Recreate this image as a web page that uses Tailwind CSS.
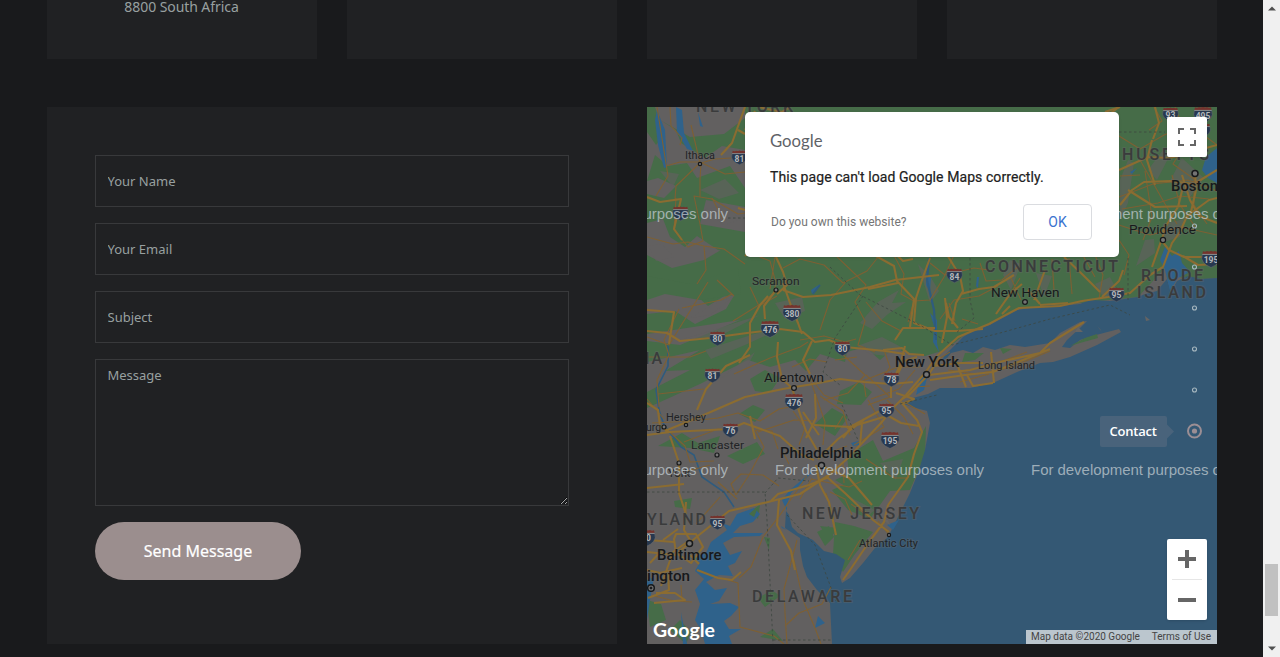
<!DOCTYPE html>
<html lang="en">
<head>
<meta charset="utf-8">
<title>Contact</title>
<script src="https://cdn.jsdelivr.net/npm/@tailwindcss/browser@4"></script>
</head>
<body class="flex h-[657px] w-[1280px] overflow-hidden bg-[#191a1c] font-['Noto_Sans',sans-serif] text-[#98a0a0]">
<main class="w-[1263px] shrink-0 pl-[47px]">
  <section class="flex h-[59px] gap-[30px] overflow-hidden">
    <div class="w-[270px] bg-[#202123] pr-px text-center text-[14px] leading-[14px] tracking-[-0.07px]"><p>8800 South Africa</p></div>
    <div class="w-[270px] bg-[#202123]"></div>
    <div class="w-[270px] bg-[#202123]"></div>
    <div class="w-[270px] bg-[#202123]"></div>
  </section>
  <section class="mt-12 flex gap-[30px]">
    <form class="flex h-[537px] w-[570px] flex-col gap-4 bg-[#202123] p-12 text-[13px]">
      <input class="block h-[52px] w-[474px] shrink-0 border border-[#38393b] bg-transparent px-[11.5px] placeholder:text-[#98a0a0]" placeholder="Your Name">
      <input class="block h-[52px] w-[474px] shrink-0 border border-[#38393b] bg-transparent px-[11.5px] placeholder:text-[#98a0a0]" placeholder="Your Email">
      <input class="block h-[52px] w-[474px] shrink-0 border border-[#38393b] bg-transparent px-[11.5px] placeholder:text-[#98a0a0]" placeholder="Subject">
      <textarea class="block h-[147px] w-[474px] shrink-0 resize border border-[#38393b] bg-transparent px-[11.5px] py-[5px] leading-5 placeholder:text-[#98a0a0]" placeholder="Message"></textarea>
      <button type="button" class="h-[58px] w-[206px] shrink-0 rounded-full bg-[#9b8e8e] text-[16px] text-white [-webkit-text-stroke:0.2px_white]">Send Message</button>
    </form>
    <div class="relative h-[537px] w-[570px] overflow-hidden bg-[#626060]">
      <svg class="block" width="570" height="537" viewBox="647 107 570 537" font-family="Roboto, sans-serif">
        <defs>
          <symbol id="sh" viewBox="0 0 20 18" overflow="visible">
            <path d="M1.5 4 Q-.5 9 2.5 12.500 Q5 15.500 10 17.500 Q15 15.500 17.500 12.500 Q20.500 9 18.500 4Z" fill="#27384f" stroke="#6d7175" stroke-width=".5"/>
            <path d="M2 1.200 Q4 2.200 6 1 Q8 2 10 .8 Q12 2 14 1 Q16 2.200 18 1.200 L18.600 4H1.400Z" fill="#74332d"/>
            <path d="M1.400 4.400H18.600" stroke="#969696" stroke-width=".9"/>
          </symbol>
        </defs>
        <!-- Woodland -->
        <g fill="#466c48">
          <path d="M745 107H1217V278L1185 280 1165 268 1138 297 1060 305 1017 309 990 324 963 336 945 350 925 356 893 349 880 360 865 347 847 352 845 362 820 354 806 371 795 360 770 367 748 360 700 384 647 408V392L690 370 665 371 700 350 647 362V341L680 345 740 320 700 326 647 334V314L675 311 695 324 726 309 739 287 708 306 690 290 647 288V255L672 268 704 260 726 247 745 255Z"/>
          <path d="M660 120L690 137 724 134 745 118V150L722 146 705 158 681 143 676 130ZM647 107H655L664 135 656 145 647 132ZM655 155L668 166 687 163 697 178 730 166 745 188V207L706 200 700 224 745 232V256L718 250 697 236 685 247 670 237 663 219 647 223V194L664 198 676 186 658 178 647 181Z"/>
          <path d="M847 456L873 440 883 461 914 448 926 426 925 455 910 490 890 491 870 519 848 510 832 490 850 482ZM835 522L854 526 873 532 855 554 843 572 833 554ZM820 526L838 528 829 540ZM750 379L765 370 780 378 770 393 755 391ZM739 414L753 405 765 410 755 422ZM727 456L757 442 765 454 743 464ZM658 446L682 433 698 443 720 436 714 453 690 448ZM674 501L692 498 690 509 675 507ZM750 511L760 505 758 519ZM764 537L770 538 769 550ZM817 532L829 526 834 537 825 546ZM647 600L661 604 666 620 650 627ZM758 598L772 590 780 596 765 607ZM840 391L859 382 872 392 861 405 837 404ZM815 424L832 408 848 417 835 436ZM760 637L773 629 783 641ZM670 630L680 620 691 632 686 644ZM835 480L848 474 865 477 850 489Z"/>
          <path d="M647 276L690 284 738 268 741 294 700 300 665 294 647 300Z"/>
        </g>
        <!-- Clearings -->
        <g fill="#626060" opacity=".65">
          <path d="M860 323L878 302 899 290 892 303 906 302 888 314 872 329ZM857 346L882 337 903 348 895 357 870 354ZM690 318L718 302 735 296 710 315ZM680 340L710 331 760 315 720 336ZM705 350L754 334 780 329 745 345 711 359ZM775 303L802 297 805 311 785 319ZM721 378L755 352 745 370ZM1136 266L1145 240 1154 239 1155 253ZM1148 170L1163 150 1170 155 1157 180ZM1170 181L1182 158 1204 178 1190 197ZM1120 180L1128 160 1134 163 1128 203 1120 220ZM1163 224L1184 219 1180 237 1164 242ZM1036 273L1052 276 1044 297ZM1095 284L1110 277 1118 292 1104 298ZM880 463L903 459 896 480ZM850 497L875 510 866 517ZM918 264L930 276 939 291 930 303Z"/>
          <path d="M660 171L679 174 673 187ZM700 190L725 179 739 193 719 199ZM704 209L728 206 740 220 724 225ZM1003 275L1010 260 1021 264 1011 290ZM648 246L662 244 674 257 656 261Z"/>
        </g>
        <!-- Ocean and bays -->
        <path fill="#345874" d="M1217 278L1201 279 1188 276 1177 281 1171 292 1167 279 1157 291 1145 294 1138 297 1110 301 1090 300 1080 304 1060 306 1050 305 1017 310 1000 318 990 325 976 329 963 337 953 347 946 354 941 361 947 358 951 353 963 350 973 353 983 347 995 350 1010 345 1025 347 1050 343 1060 333 1080 322 1087 321 1080 328 1067 340 1062 347 1070 348 1080 340 1096 335 1119 329 1121 332 1097 345 1070 357 1053 362 1040 363 1017 372 993 383 970 388 940 388 928 394 913 398 902 403 912 407 927 411 930 423 925 450 918 473 910 493 900 513 888 537 875 548 863 563 850 578 842 583 840 577 845 560 836 554 824 551 813 540 798 533 792 527 789 515 786 511 785 528 800 538 800 550 803 566 807 577 817 590 830 603 832 644H1217Z"/>
        <g fill="#2f628b">
          <path d="M1217 148L1206 157 1202 170 1208 178 1217 183ZM1165 270L1160 260 1165 247 1172 256 1179 251 1182 263 1190 272 1178 278 1170 291Z"/>
          <path d="M737 514L754 508 760 514 753 522 740 526 733 533 763 533 760 536 734 537 723 543 730 555 742 551 735 563 728 566 733 576 719 575 706 582 715 590 727 588 719 601 710 604 730 603 739 607 731 616 724 621 729 629 741 629 729 636 732 644H705L701 630 695 620 700 604 695 590 704 579 695 571 700 562 690 558 706 553 711 542 727 530 722 523 730 526Z"/>
          <path d="M657 110L665 130 667 167 664 168 658 145 655 120ZM676 107L682 110 684 133 693 151 687 149 677 132ZM698 112L703 127 700 126ZM781 526L787 530 782 528ZM927 276L931 276 930 292 926 285ZM930 313L937 320 937 343 939 352 933 342 934 326ZM977 277L979 277 978 288 976 286ZM1130 172L1137 168 1132 174ZM920 379L928 374 924 390 916 395ZM851 443L862 440 860 445 853 446ZM811 290L820 284 812 294Z"/>
          <path d="M787 511L782 500 790 490 804 478 816 468 803 482 791 493 787 504ZM654 577L650 600 647 620V580ZM681 612L687 644H683ZM825 623L815 628 818 616ZM887 525L899 520 893 530Z"/>
        </g>
        <g fill="none" stroke="#2f5b7e" stroke-width="1.600"><path d="M668 345V366L656 390L659 410 664 425 681 447 694 455 702 477 724 492 734 507"/><path d="M929 258L927 280 934 310 936 340" stroke-width="2.200"/><path d="M813 294L820 285"/></g>
        <g fill="#656464"><path d="M1075 332L1078 327 1083 332ZM1097 326L1100 329 1102 332ZM1145 316L1150 320 1146 321ZM883 520L890 525 888 520Z"/></g>
        <path fill="#466c48" d="M1070 346L1085 338 1097 334 1098 338 1080 343ZM965 353L984 353 975 360 962 362ZM1000 348L1012 349 1003 354ZM749 514L759 505 754 517Z"/>
        <!-- Minor roads -->
        <g fill="none" stroke="#7e6033" stroke-width="1.100" stroke-linejoin="round">
          <path d="M657 107L668 176 656 196M670 107L671 126 682 138 680 145M691 125L700 163 676 186 675 199M731 158L715 159 701 163 700 179 700 197M666 166L680 162 700 162 725 174 745 172M676 198L674 230 688 247 703 241 700 224 694 196 712 199 738 214M647 237L673 244 688 242 704 246 724 249 745 264M704 246L706 270 697 284M738 214L745 213M712 198L724 221"/>
          <path d="M647 337L669 345 708 282M717 280L734 296M679 309L664 340 669 355 657 380 659 407M682 308L721 300 732 294M733 321L762 303 774 293 776 283M734 374L770 358 800 347 808 342M658 394L704 389M647 357L690 357 706 351M647 399L664 419M652 423L690 421 718 418 738 413 760 421 779 409 800 405M662 425L685 446 690 462 714 461M684 442L718 429 730 431M755 430L764 447 749 475 736 495M755 430L772 431 778 449"/>
          <path d="M776 283L770 261 748 252M750 287L759 306 777 296M775 257L770 289M783 268L800 259 824 265 843 283 867 271 879 256M845 283L830 300 820 330M800 340L824 336 845 342 856 339M830 250L856 275 866 285 855 302 865 321 858 345 875 352M866 302L882 321 901 331M891 250L904 274 901 294 914 301 908 322M914 301L930 300 944 277 955 253M930 263L945 275 974 268 989 270M940 319L954 300 979 296 998 286M955 321L949 303M962 319L978 324M866 375L890 397 868 405M840 352L865 375 848 393 824 400M820 396L843 411 850 435M868 400L884 427 854 445M809 376L824 395 843 403M810 379L825 422 823 445M793 411L805 428 799 445M758 432L794 420 815 421"/>
          <path d="M980 263L986 281 1002 280 1019 266M1011 278L1021 300M1020 278L1007 299M1052 259L1054 290M1069 258L1072 294M1081 252L1095 277M1095 255L1103 275 1099 299M1119 240L1129 255 1124 275M1119 225L1150 235 1181 227 1217 235M1119 197L1153 184 1188 180 1217 191M1140 160L1165 204 1177 224M1145 171L1152 217 1143 240M1172 175L1180 205 1196 228M1194 174V205L1207 224M1181 151L1173 164 1194 179M1119 136L1140 149 1164 135 1190 125 1217 145M1154 107L1162 121 1149 130M1175 107L1181 123M1120 176L1140 175M1122 209L1158 203 1180 196 1209 199"/>
          <path d="M807 476L780 515 763 537 751 567 739 578M779 486L763 475 741 474 731 484 736 495M797 540L784 589 785 613 787 644M794 560L803 600 815 628 821 644M785 626L799 613 822 604 831 587M728 580L738 583 740 627 774 636 784 644M718 482L737 499M811 479L849 487 862 481M812 478L800 499M830 492L845 499 852 515M843 463L844 483M866 459L894 478 908 478M826 493L834 519M851 504L871 518M889 535L878 521M848 560L860 540M655 596L674 601 692 602M681 585L682 601M720 497L696 524M688 471L710 465"/>
          <path d="M884 350L890 367 882 380M860 382L898 367 920 367M871 399L899 389 915 370M887 400L904 417 913 434M835 360L857 357M948 370L975 374 1009 368 1050 351M960 382L989 374M1000 362L1027 352M932 363L950 352M906 403L925 414M843 416L835 429M914 387L930 386M864 383L866 397M792 367L810 359 827 362M826 454L847 446M783 452L789 464"/>
        </g>
        <!-- Motorways -->
        <g fill="none" stroke="#8b6c31" stroke-width="2.100" stroke-linejoin="round">
          <path d="M745 107L732 143 721 155M647 197L660 202 681 199 674 229 682 240M738 130L745 134M738 208L745 210M745 130L755 111M758 107L782 112 790 107M1120 107L1105 112"/>
          <path d="M647 310L674 312 669 344M647 331L667 333 680 341 710 338 747 333 780 329 803 332 815 342 829 340 845 347 885 351 905 354"/>
          <path d="M768 296L760 305 750 323 750 347 739 363M777 294L787 285 783 272 776 257M783 283L790 303 798 323 802 334M776 290L764 306 765 319M783 290L803 297 831 295 870 287 895 280 939 275M812 341L803 360 810 374M778 342L777 357 782 379 792 388 799 410"/>
          <path d="M697 410L706 389 726 366 750 355M665 431L706 414 745 397 783 389 813 384 840 379 864 382 891 384 913 382M647 403L658 410 660 426 669 432M647 435L670 432 690 431 730 429 744 423 780 436 800 454 814 460M750 416L755 439M798 408L806 431 817 450M803 412L819 435M815 394L816 418 806 438M670 436L679 463 679 493 686 514"/>
          <path d="M647 488L684 484M686 502L684 530 690 540 673 552 661 586M647 552L675 555 699 535 729 511 768 502 800 494 829 475 848 458 881 423 894 407 906 395 925 373 937 356 958 337 989 324 1019 308 1060 306 1082 301 1108 297 1130 293 1150 275 1163 267 1172 243 1180 232 1187 216 1209 200 1217 198"/>
          <path d="M779 500L777 525 791 551 795 570M771 501L778 494 809 485 829 477M816 465L820 485 829 502 836 535M827 477L846 494 873 520 889 532M824 467L849 478 872 505M888 505L884 522 869 542 850 570 843 580M888 505L908 477 914 454 922 432 917 420 901 402M888 404L885 414 901 423 919 426M847 428L867 422 890 415M818 459L838 439 864 420M814 425L850 427 885 408M843 438L853 425 862 423 860 445"/>
          <path d="M676 534L696 534 703 547 691 563 676 553 674 539ZM663 540L678 529M697 570L718 578 732 580 741 572M690 555L699 564M647 570L660 573 682 568M648 598L669 590 668 573M654 603L685 600 675 593 656 593M662 550L650 563M648 540L674 542"/>
          <path d="M913 259L903 261 890 249M865 250L894 266 897 281 914 299 910 327M930 258L923 277 916 298 914 323 935 331 957 331 983 329M945 298L947 317 942 343M958 328L949 317 946 303M961 294L979 289 994 287 1014 275M952 324L956 303 963 291 960 276 946 253M898 283L868 289M895 340L903 328 935 328M905 346L900 365 891 386 891 398M883 350L902 348 909 354 924 355M892 386L904 361 917 357M940 357L929 374 910 394 902 399M929 375L970 370 1004 361 1040 353 1050 343 1084 322M933 366L961 363 983 363M930 380L965 375 993 372 1013 364 1050 349M967 375L973 386 993 383M991 352L994 383M955 359L966 387M896 393L914 399 902 404"/>
          <path d="M1045 270L1034 300M1064 257L1082 274 1100 292M1123 270L1119 281 1102 297M1028 290L1040 304M1010 306L1002 314M996 314L1010 294 1022 284M1040 305L1068 303M1119 170L1148 157 1170 158 1217 145M1120 205L1132 190 1144 182 1170 181 1194 184 1217 170M1155 185L1147 160 1152 140M1128 190L1155 207 1187 206M1165 230L1152 267M1162 241L1169 250 1184 257 1205 257M1182 175L1190 200 1199 216 1217 223M1195 172L1196 190 1190 216M1155 107L1159 123 1153 139M1183 187L1178 207 1162 232M1183 256L1198 265 1217 264"/>
          <path d="M1119 107L1107 116M745 256L752 250M798 257L795 250"/>
        </g>
        <g fill="none" stroke="#3c4640" stroke-width=".8" stroke-dasharray="2.500 2.500"><path d="M830 267L860 295 920 325 952 345 1000 333 1050 319 1110 305 1130 315M970 258V300L974 318 956 333M863 296L835 338 823 372 840 385M647 492H765L767 520 773 644M773 640H832M765 493L778 478 809 481M787 515L815 545 836 601M900 404L937 395M1064 132H1165M1128 258V300M728 218H745M842 405L858 440"/></g>
        <!-- Place names -->
        <g fill="#3a3b3c" font-size="16" font-weight="500" stroke="#676868" stroke-opacity=".35" stroke-width="2" paint-order="stroke">
          <text x="696" y="112" textLength="97">NEW YORK</text><text x="1122" y="160" textLength="87">HUSETTS</text><text x="985" y="272" textLength="133">CONNECTICUT</text><text x="1141" y="281" textLength="62">RHODE</text><text x="1137" y="298" textLength="69">ISLAND</text><text x="645" y="364" textLength="17">IA</text><text x="802" y="519" textLength="117">NEW JERSEY</text><text x="647" y="525" textLength="59">YLAND</text><text x="752" y="602" textLength="100">DELAWARE</text>
        </g>
        <g fill="#17191b" stroke="#6a6b6b" stroke-opacity=".3" stroke-width="2" paint-order="stroke">
          <g font-size="11.500" fill="#222426" lengthAdjust="spacingAndGlyphs"><text x="685" y="159" textLength="30" lengthAdjust="spacingAndGlyphs">Ithaca</text><text x="752" y="285" textLength="47.500" lengthAdjust="spacingAndGlyphs">Scranton</text><text x="666" y="421" textLength="40" lengthAdjust="spacingAndGlyphs">Hershey</text><text x="691" y="449" textLength="53" lengthAdjust="spacingAndGlyphs">Lancaster</text><text x="978" y="369" textLength="57" lengthAdjust="spacingAndGlyphs">Long Island</text><text x="859" y="547" textLength="59" lengthAdjust="spacingAndGlyphs">Atlantic City</text><text x="668" y="477" textLength="22" lengthAdjust="spacingAndGlyphs">York</text><text x="646" y="431" textLength="15" lengthAdjust="spacingAndGlyphs">urg</text></g>
          <g font-size="13"><text x="764" y="382" textLength="60" lengthAdjust="spacingAndGlyphs">Allentown</text><text x="991" y="297" textLength="68.500" lengthAdjust="spacingAndGlyphs">New Haven</text><text x="1129" y="234" textLength="67" lengthAdjust="spacingAndGlyphs">Providence</text></g>
          <g font-size="14.500" font-weight="500"><text x="895" y="367" textLength="64" lengthAdjust="spacingAndGlyphs">New York</text><text x="780" y="458" textLength="81.500" lengthAdjust="spacingAndGlyphs">Philadelphia</text><text x="1171" y="191" textLength="47" lengthAdjust="spacingAndGlyphs">Boston</text><text x="657" y="560" textLength="64.500" lengthAdjust="spacingAndGlyphs">Baltimore</text><text x="647" y="581" textLength="43" lengthAdjust="spacingAndGlyphs">ington</text></g>
        </g>
        <g fill="#747474" stroke="#17191b"><g stroke-width="1.200"><circle cx="700" cy="164" r="1.700"/><circle cx="776" cy="290" r="2"/><circle cx="686" cy="425" r="1.700"/><circle cx="717" cy="455" r="2"/><circle cx="679" cy="463" r="2"/><circle cx="889" cy="535" r="1.600"/><circle cx="664" cy="427" r="2"/><circle cx="794" cy="388" r="2.400"/><circle cx="1025" cy="302" r="2.400"/><circle cx="1163" cy="240" r="2.600"/></g><g stroke-width="1.500"><circle cx="926.500" cy="374.500" r="3"/><circle cx="821.500" cy="465.500" r="3"/><circle cx="1195" cy="173.500" r="3"/><circle cx="689.500" cy="543.500" r="3"/><circle cx="651" cy="588" r="3.300"/></g><circle cx="651" cy="588" r="1" fill="#17191b"/></g>
        <!-- Route shields -->
        <g fill="#b4b7ba" font-size="8.500" font-weight="700" text-anchor="middle">
          <use href="#sh" x="731" y="149" width="17" height="17"/><text x="739.500" y="162">81</text>
          <use href="#sh" x="672" y="205" width="17" height="17"/>
          <use href="#sh" x="946" y="267" width="17" height="17"/><text x="954.500" y="279.500">84</text>
          <use href="#sh" x="782" y="304" width="20" height="18"/><text x="792" y="317">380</text>
          <use href="#sh" x="760" y="320" width="20" height="18"/><text x="770" y="333">476</text>
          <use href="#sh" x="709" y="330" width="17" height="17"/><text x="717.500" y="342">80</text>
          <use href="#sh" x="704" y="367" width="17" height="17"/><text x="712.500" y="379">81</text>
          <use href="#sh" x="834" y="340" width="17" height="17"/><text x="842.500" y="352">80</text>
          <use href="#sh" x="883" y="371" width="17" height="17"/><text x="891.500" y="383">78</text>
          <use href="#sh" x="784" y="393" width="20" height="18"/><text x="794" y="406">476</text>
          <use href="#sh" x="722" y="422" width="17" height="17"/><text x="730.500" y="434">76</text>
          <use href="#sh" x="878" y="402" width="17" height="17"/><text x="886.500" y="414">95</text>
          <use href="#sh" x="880" y="431" width="20" height="18"/><text x="890" y="444">195</text>
          <use href="#sh" x="709" y="514" width="17" height="17"/><text x="717.500" y="527">95</text>
          <use href="#sh" x="1108" y="286" width="17" height="17"/><text x="1116.500" y="298">95</text>
          <use href="#sh" x="1162" y="106" width="17" height="17"/><text x="1170.500" y="118">93</text>
          <use href="#sh" x="1193" y="106" width="20" height="18"/><text x="1203" y="119">495</text>
          <use href="#sh" x="1194" y="122" width="17" height="17"/>
          <use href="#sh" x="1201" y="250" width="20" height="18"/><text x="1211" y="263">195</text>
          <use href="#sh" x="636" y="529" width="20" height="18"/><text x="648.500" y="541">0</text>
        </g>
        <g fill="#c1cbd0" fill-opacity=".75" font-family="Liberation Sans, sans-serif" font-size="15">
          <text x="519" y="219" textLength="209">For development purposes only</text><text x="1031" y="219" textLength="209">For development purposes only</text>
          <text x="519" y="475" textLength="209">For development purposes only</text><text x="775" y="475" textLength="209">For development purposes only</text><text x="1031" y="475" textLength="209">For development purposes only</text>
        </g>
        <text x="653" y="636.500" font-family="Lato, sans-serif" font-size="19.500" font-weight="700" fill="#fff" textLength="62" lengthAdjust="spacingAndGlyphs">Google</text>
        <!-- Section navigation -->
        <g fill="none" stroke="#a9b9c1" stroke-width="1.100"><circle cx="1194.500" cy="226" r="2"/><circle cx="1194.500" cy="267" r="2"/><circle cx="1194.500" cy="308" r="2"/><circle cx="1194.500" cy="349" r="2"/><circle cx="1194.500" cy="390" r="2"/></g>
        <circle cx="1194.500" cy="431" r="6.500" fill="none" stroke="#9b8e94" stroke-width="2"/><circle cx="1194.500" cy="431" r="2.600" fill="#9b8e94"/>
        <path d="M1102 416H1165Q1167 416 1167 418V424.500L1174 431.500 1167 438.500V445Q1167 447 1165 447H1102Q1100 447 1100 445V418Q1100 416 1102 416Z" fill="#49637b"/>
        <text x="1109.500" y="436" font-family="Open Sans, sans-serif" font-size="13" font-weight="600" fill="#fff" textLength="47.500">Contact</text>
      </svg>
      <div class="absolute left-[98px] top-[5px] flex h-[145px] w-[374px] flex-col rounded-[5px] bg-white pl-[25px] pr-[27px] pt-[18px] font-[Roboto,sans-serif] shadow">
        <svg class="block shrink-0" width="54" height="22"><text x="0" y="16.500" font-family="Lato, sans-serif" font-size="17" fill="#5f6368" textLength="52.500" lengthAdjust="spacingAndGlyphs">Google</text></svg>
        <p class="mt-[15px] whitespace-nowrap text-[14px] font-normal leading-5 tracking-[0.08px] text-[#212121] [-webkit-text-stroke:0.2px_#212121]">This page can't load Google Maps correctly.</p>
        <div class="mt-[17px] flex items-center justify-between"><span class="pl-px text-[12px] tracking-[0.02px] text-[#757575]">Do you own this website?</span><button type="button" class="h-9 w-[69px] rounded-[4px] border border-[#dadce0] text-[14px] text-[#3b73cf]">OK</button></div>
      </div>
      <div class="absolute left-[520px] top-[10px] grid size-10 place-items-center rounded-[2px] bg-white shadow">
        <svg width="18" height="18" fill="none" stroke="#666" stroke-width="2"><path d="M1 6V1H6M12 1H17V6M17 12V17H12M6 17H1V12"/></svg>
      </div>
      <div class="absolute left-[520px] top-[432px] flex h-[81px] w-10 flex-col items-center rounded-[2px] bg-white shadow">
        <div class="grid h-10 place-items-center"><svg width="18" height="18" fill="#666"><path d="M7 0H11V7H18V11H11V18H7V11H0V7H7Z"/></svg></div>
        <div class="h-px w-[30px] bg-[#e6e6e6]"></div>
        <div class="grid h-10 place-items-center"><svg width="18" height="18" fill="#666"><path d="M0 7H18V11H0Z"/></svg></div>
      </div>
      <div class="absolute bottom-0 right-0 flex h-[14px] w-[191px] items-center justify-between whitespace-nowrap bg-[#bbc6ce] pl-[5px] pr-[6px] font-[Roboto,sans-serif] text-[10px] leading-[13px] text-[#444]"><span class="-mt-px">Map data ©2020 Google</span><span class="-mt-px">Terms of Use</span></div>
    </div>
  </section>
</main>
<aside class="flex w-[17px] shrink-0 flex-col items-center bg-[#f0f0f0]">
  <svg class="mt-[6px]" width="8" height="5"><path d="M0 4.500L4 .5 8 4.500Z" fill="#505050"/></svg>
  <div class="mt-[553px] h-[52px] w-[13px] bg-[#c1c1c1]"></div>
  <svg class="mt-[30px]" width="8" height="5"><path d="M0 .5L4 4.500 8 .5Z" fill="#505050"/></svg>
</aside>
</body>
</html>
